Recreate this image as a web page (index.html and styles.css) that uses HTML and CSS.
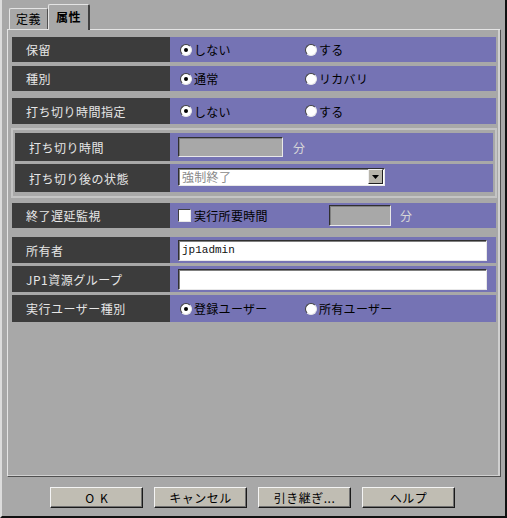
FILE: index.html
```html
<!DOCTYPE html>
<html lang="ja">
<head>
<meta charset="utf-8">
<link rel="stylesheet" href="styles.css">
</head>
<body>
<div class="window">
  <div class="tabs">
    <div class="tab">定義</div>
    <div class="tab active">属性</div>
  </div>
  <div class="panel">
    <div class="row r1">
      <div class="label">保留</div>
      <div class="value">
        <span class="opt"><span class="radio on"></span>しない</span>
        <span class="opt"><span class="radio"></span>する</span>
      </div>
    </div>
    <div class="row r2">
      <div class="label">種別</div>
      <div class="value">
        <span class="opt"><span class="radio on"></span>通常</span>
        <span class="opt"><span class="radio"></span>リカバリ</span>
      </div>
    </div>
    <div class="row r3">
      <div class="label">打ち切り時間指定</div>
      <div class="value">
        <span class="opt"><span class="radio on"></span>しない</span>
        <span class="opt"><span class="radio"></span>する</span>
      </div>
    </div>
    <div class="group">
      <div class="row inner g1">
        <div class="label">打ち切り時間</div>
        <div class="value">
          <span class="field disabled w105"></span>
          <span class="unit">分</span>
        </div>
      </div>
      <div class="row inner g2">
        <div class="label">打ち切り後の状態</div>
        <div class="value">
          <span class="select"><span class="seltext">強制終了</span><span class="selbtn"><svg width="7" height="4" viewBox="0 0 7 4"><path d="M0 0h7L3.5 4z" fill="#000"/></svg></span></span>
        </div>
      </div>
    </div>
    <div class="row r5">
      <div class="label">終了遅延監視</div>
      <div class="value">
        <span class="check"></span><span class="checktext">実行所要時間</span>
        <span class="field disabled w62"></span>
        <span class="unit u2">分</span>
      </div>
    </div>
    <div class="row r6">
      <div class="label">所有者</div>
      <div class="value">
        <span class="field white wide mono">jp1admin</span>
      </div>
    </div>
    <div class="row r7">
      <div class="label">JP1資源グループ</div>
      <div class="value">
        <span class="field white wide"></span>
      </div>
    </div>
    <div class="row r8">
      <div class="label">実行ユーザー種別</div>
      <div class="value">
        <span class="opt"><span class="radio on"></span>登録ユーザー</span>
        <span class="opt"><span class="radio"></span>所有ユーザー</span>
      </div>
    </div>
  </div>
  <div class="buttons">
    <div class="btn ok">OK</div>
    <div class="btn">キャンセル</div>
    <div class="btn">引き継ぎ...</div>
    <div class="btn">ヘルプ</div>
  </div>
</div>
</body>
</html>
```
FILE: styles.css
```css
* { box-sizing: border-box; }
html, body { margin: 0; padding: 0; background: #a8a8a8; }
body {
  font-family: "Noto Sans CJK JP", "DejaVu Sans", sans-serif;
  font-size: 12px;
  color: #000;
}
.window {
  width: 507px;
  height: 518px;
  background: #a8a8a8;
  border-left: 2px solid #dcdcdc;
  border-right: 2px solid #111;
  border-bottom: 2px solid #111;
  display: flex;
  flex-direction: column;
}
.tabs {
  height: 29px;
  display: flex;
  align-items: flex-end;
  padding-left: 7px;
  position: relative;
  z-index: 2;
}
.tab {
  width: 39px;
  height: 21px;
  border-top: 1px solid #e4e4e4;
  border-left: 1px solid #e4e4e4;
  border-right: 1px solid #505050;
  border-radius: 2px 2px 0 0;
  display: flex;
  align-items: center;
  justify-content: center;
  font-size: 12px;
  line-height: 1;
  letter-spacing: 0.5px;
}
.tab.active {
  width: 42px;
  height: 26px;
  margin-bottom: -1px;
  background: #a8a8a8;
  font-weight: bold;
  border-right: 2px solid #404040;
  padding-bottom: 2px;
}
.panel {
  margin-left: 5px;
  width: 494px;
  height: 448px;
  border-top: 1px solid #e4e4e4;
  border-left: 1px solid #e4e4e4;
  border-right: 1px solid #505050;
  border-bottom: 1px solid #505050;
  box-shadow: inset -2px -1px 0 #d0d0d0;
  padding: 7px 4px 0 4px;
  display: flex;
  flex-direction: column;
}
.row {
  display: flex;
  flex: none;
}
.label {
  width: 158px;
  background: #3c3c3c;
  color: #e6e6e6;
  padding-left: 14px;
  display: flex;
  align-items: center;
  letter-spacing: 0.5px;
  white-space: nowrap;
}
.value {
  flex: 1;
  background: #7573b4;
  display: flex;
  align-items: center;
  padding-left: 8px;
  white-space: nowrap;
}
.r1 { height: 25px; margin-bottom: 4px; }
.r2 { height: 25px; margin-bottom: 7px; }
.r3 { height: 26px; margin-bottom: 4px; }
.r5 { height: 25px; margin-bottom: 9px; }
.r6 { height: 26px; margin-bottom: 3px; }
.r7 { height: 26px; margin-bottom: 3px; }
.r8 { height: 27px; }

.group {
  flex: none;
  margin: 0 0 5px -1px;
  width: 486px;
  height: 70px;
  border: 2px solid #c4c4c4;
  padding: 3px 2px 0 2px;
  display: flex;
  flex-direction: column;
}
.inner .label { width: 155px; }
.g1 { height: 28px; margin-bottom: 3px; }
.g2 { height: 28px; }

.opt {
  display: inline-flex;
  align-items: center;
  width: 125px;
  letter-spacing: 0.3px;
}
.radio {
  width: 12px;
  height: 12px;
  border-radius: 50%;
  background: #fff;
  border: 1px solid;
  border-color: #404040 #e8e8e8 #e8e8e8 #404040;
  margin: 0 2px 0 2px;
  position: relative;
  flex: none;
}
.radio.on::after {
  content: "";
  position: absolute;
  left: 3px;
  top: 3px;
  width: 4px;
  height: 4px;
  border-radius: 50%;
  background: #000;
}
.field {
  display: inline-flex;
  align-items: center;
  border: 1px solid;
  border-color: #303030 #e8e8e8 #e8e8e8 #303030;
  box-shadow: inset 1px 1px 0 #808080;
  flex: none;
}
.disabled { background: #a8a8a8; }
.w105 { width: 105px; height: 20px; }
.w62 { width: 62px; height: 21px; margin-left: 6px; }
.white { background: #fff; }
.wide { width: 309px; height: 21px; }
.mono {
  font-family: "Liberation Mono", "DejaVu Sans Mono", monospace;
  font-size: 11px;
  padding-left: 3px;
  color: #111;
}
.unit {
  color: #d8d8d8;
  margin-left: 10px;
}
.unit.u2 { margin-left: 9px; }
.select {
  display: inline-flex;
  width: 207px;
  height: 18px;
  background: #fff;
  border: 1px solid;
  border-color: #303030 #e8e8e8 #e8e8e8 #303030;
  box-shadow: inset 1px 1px 0 #808080;
  margin-top: -2px;
}
.seltext {
  flex: 1;
  color: #8a8a8a;
  padding-left: 3px;
  line-height: 15px;
  letter-spacing: 0.3px;
}
.selbtn {
  width: 15px;
  height: 15px;
  margin: 0 1px 0 0;
  background: #b8b5ab;
  border: 1px solid;
  border-color: #f0f0f0 #202020 #202020 #f0f0f0;
  display: flex;
  align-items: center;
  justify-content: center;
}
.check {
  width: 13px;
  height: 13px;
  background: #fff;
  border: 1px solid;
  border-color: #404040 #e8e8e8 #e8e8e8 #404040;
  flex: none;
}
.checktext {
  margin-left: 3px;
  letter-spacing: 0.3px;
  width: 129px;
}
.buttons {
  display: flex;
  justify-content: center;
  gap: 11px;
  margin-top: 10px;
  padding-right: 2px;
}
.btn {
  width: 93px;
  height: 21px;
  background: #c0bdb3;
  border: 1px solid;
  border-color: #f4f4f4 #1a1a1a #1a1a1a #f4f4f4;
  box-shadow: inset -1px -1px 0 #707070;
  display: flex;
  align-items: center;
  justify-content: center;
  letter-spacing: 0.5px;
}
.btn.ok { letter-spacing: 6px; padding-left: 6px; }
```
